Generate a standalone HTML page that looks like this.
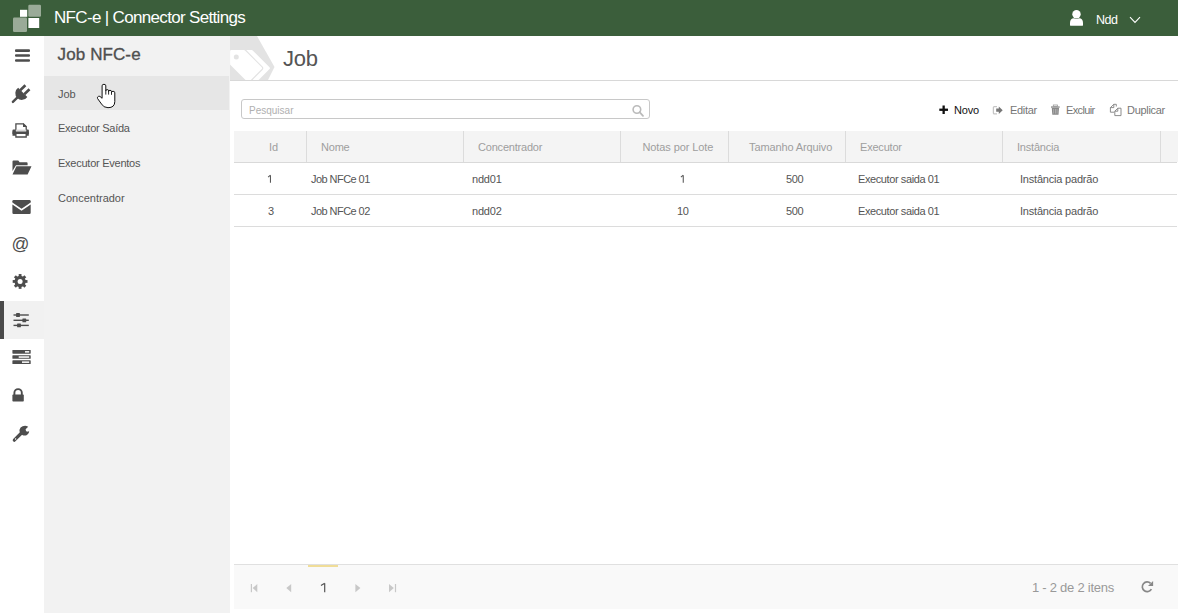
<!DOCTYPE html>
<html><head><meta charset="utf-8">
<style>
*{margin:0;padding:0;box-sizing:border-box}
html,body{width:1178px;height:613px;overflow:hidden;background:#fff;font-family:"Liberation Sans",sans-serif;color:#555}
.a{position:absolute}
.t{position:absolute;white-space:nowrap;line-height:1}
#hdr{left:0;top:0;width:1178px;height:36px;background:#3b5e3b}
#iconbar{left:0;top:36px;width:44px;height:577px;background:#fff}
#panel{left:44px;top:36px;width:186px;height:577px;background:#f2f2f2}
#main{left:230px;top:36px;width:948px;height:577px;background:#fff}
.ic{position:absolute;left:0;top:0}
</style></head><body>

<!-- HEADER -->
<div id="hdr" class="a">
  <svg class="ic" width="60" height="36">
    <rect x="13" y="17.5" width="14" height="14.5" rx="1.2" fill="#9aab98"/>
    <rect x="28.3" y="4.7" width="12.7" height="12" rx="1.2" fill="#9aab98"/>
    <rect x="20" y="9.8" width="7.2" height="7" fill="#fff"/>
    <rect x="28.4" y="18" width="10.8" height="10" fill="#fff"/>
  </svg>
  <div class="t" style="left:54px;top:8.6px;font-size:17px;color:#fff;letter-spacing:-0.67px">NFC-e | Connector Settings</div>
  <svg class="ic" width="1178" height="36">
    <circle cx="1076.5" cy="14.2" r="4.2" fill="#fff"/>
    <path d="M1070 25.3 L1070 23 Q1070 18.2 1074 18.2 Q1076.5 19.6 1079 18.2 Q1083 18.2 1083 23 L1083 25.3 Q1083 25.7 1082.5 25.7 L1070.5 25.7 Q1070 25.7 1070 25.3 Z" fill="#fff"/>
    <polyline points="1130,17.2 1135,22.4 1140,17.2" fill="none" stroke="#fff" stroke-width="1.1"/>
  </svg>
  <div class="t" style="left:1096px;top:13.6px;font-size:12.5px;color:#fff;letter-spacing:-0.5px">Ndd</div>
</div>

<!-- ICON BAR -->
<div id="iconbar" class="a"></div>
<div class="a" style="left:0;top:301px;width:44px;height:38px;background:#f1f1f1"></div>
<div class="a" style="left:0;top:301px;width:4px;height:38px;background:#4a4a4a"></div>
<svg class="ic" width="44" height="613" style="fill:#4d4d4d">
  <!-- hamburger -->
  <rect x="15" y="49.3" width="15" height="2.6" rx="1"/>
  <rect x="15" y="54.2" width="15" height="2.6" rx="1"/>
  <rect x="15" y="59.2" width="15" height="2.6" rx="1"/>
  <!-- plug -->
  <g>
    <line x1="12.9" y1="101.9" x2="18" y2="96.8" stroke="#4d4d4d" stroke-width="2.4" stroke-linecap="round"/>
    <path d="M18.16 87.86 L27.34 97.04 A6.6 6.6 0 1 1 18.16 87.86 Z"/>
    <line x1="20.2" y1="90.2" x2="25.4" y2="85.2" stroke="#4d4d4d" stroke-width="2.6"/>
    <line x1="24.3" y1="94.3" x2="29.5" y2="89.3" stroke="#4d4d4d" stroke-width="2.6"/>
  </g>
  <!-- printer -->
  <path d="M15.9 130.5 V123.8 H23.4 L26.2 126.6 V130.5" fill="none" stroke="#4d4d4d" stroke-width="1.3"/>
  <path d="M23 123.1 L26.9 127 L23 127 Z"/>
  <path d="M12.5 130.4 Q12.5 129.6 13.3 129.6 L15.9 129.6 L15.9 135.8 L12.5 135.8 Z"/>
  <path d="M26.2 129.6 L28 129.6 Q28.8 129.6 28.8 130.4 L28.8 135.8 L26.2 135.8 Z"/>
  <rect x="12.5" y="131.3" width="16.3" height="2.7"/>
  <rect x="15.9" y="129.6" width="10.3" height="1.7" fill="#d8d8d8"/>
  <path d="M15.9 134 V137 H26.2 V134" fill="none" stroke="#4d4d4d" stroke-width="1.3"/>
  <!-- folder open -->
  <path d="M12.5 161.5 Q12.5 160.6 13.5 160.6 L18.3 160.6 L19.6 162.2 L26.6 162.2 Q27.6 162.2 27.6 163.2 L27.6 165.2 L16 165.2 L12.5 171 Z"/>
  <path d="M16.4 166.2 L31.5 166.2 L27.6 174.5 L12.5 174.5 Z"/>
  <!-- envelope -->
  <path d="M13.6 200 L29.5 200 Q30.7 200 30.7 201.2 L30.7 202.6 L21.55 208.7 L12.4 202.6 L12.4 201.2 Q12.4 200 13.6 200 Z"/>
  <path d="M12.4 204.6 L21.55 210.7 L30.7 204.6 L30.7 212.8 Q30.7 214 29.5 214 L13.6 214 Q12.4 214 12.4 212.8 Z"/>
  <!-- at -->
  <text x="11.5" y="250.1" font-family="Liberation Sans" font-size="17.6" fill="#4d4d4d">@</text>
  <!-- gear -->
  <g transform="translate(20.1 281.45)">
    <circle r="5.6"/><rect x="-1.4" y="-7.4" width="2.8" height="3" transform="rotate(0)"/><rect x="-1.4" y="-7.4" width="2.8" height="3" transform="rotate(45)"/><rect x="-1.4" y="-7.4" width="2.8" height="3" transform="rotate(90)"/><rect x="-1.4" y="-7.4" width="2.8" height="3" transform="rotate(135)"/><rect x="-1.4" y="-7.4" width="2.8" height="3" transform="rotate(180)"/><rect x="-1.4" y="-7.4" width="2.8" height="3" transform="rotate(225)"/><rect x="-1.4" y="-7.4" width="2.8" height="3" transform="rotate(270)"/><rect x="-1.4" y="-7.4" width="2.8" height="3" transform="rotate(315)"/>
    <circle r="2.5" fill="#fff"/>
  </g>
  <!-- sliders -->
  <rect x="13.5" y="314.3" width="15.3" height="1.4"/>
  <rect x="13.5" y="319.6" width="15.3" height="1.4"/>
  <rect x="13.5" y="324.7" width="15.3" height="1.4"/>
  <rect x="16.1" y="313.1" width="3.8" height="3.8" rx="0.5"/>
  <rect x="22.4" y="318.4" width="3.8" height="3.8" rx="0.5"/>
  <rect x="17.1" y="323.5" width="3.8" height="3.8" rx="0.5"/>
  <!-- servers -->
  <rect x="12.4" y="350" width="18.3" height="3.7" rx="0.6"/>
  <rect x="12.4" y="355.2" width="18.3" height="3.6" rx="0.6"/>
  <rect x="12.4" y="360.3" width="18.3" height="3.7" rx="0.6"/>
  <rect x="25" y="351.1" width="4.2" height="1.5" fill="#fff"/>
  <rect x="18.7" y="356.3" width="10.5" height="1.5" fill="#fff"/>
  <rect x="22" y="361.4" width="7.2" height="1.5" fill="#fff"/>
  <!-- lock -->
  <path d="M14.4 395 L14.4 392.8 A3.7 3.7 0 0 1 21.8 392.8 L21.8 395" fill="none" stroke="#4d4d4d" stroke-width="1.9"/>
  <rect x="12.4" y="394.6" width="11.4" height="7" rx="0.8"/>
  <!-- wrench -->
  <line x1="14.3" y1="440.2" x2="21.5" y2="433" stroke="#4d4d4d" stroke-width="3.2" stroke-linecap="round"/>
  <path d="M28.2 426.8 L25.6 429.3 L26.1 431.3 L28.1 431.8 L29.2 430.7 Q29.4 433.6 27 435 Q24.6 436.2 22.3 435 L19.8 432.5 Q18.9 429.6 20.6 427.6 Q23 425.4 26.5 426 Z"/>
  <circle cx="15.6" cy="439" r="0.7" fill="#fff"/>
</svg>

<!-- PANEL -->
<div id="panel" class="a"></div>
<div class="a" style="left:44px;top:76px;width:185px;height:34px;background:#e6e6e6"></div>
<div class="t" style="left:57.6px;top:45.9px;font-size:17px;color:#4f4f4f;-webkit-text-stroke:0.35px #4f4f4f;letter-spacing:0.1px">Job NFC-e</div>
<div class="t" style="left:58px;top:88.5px;font-size:11px;color:#555">Job</div>
<div class="t" style="left:58px;top:122.5px;font-size:11px;color:#555;letter-spacing:-0.25px">Executor Saída</div>
<div class="t" style="left:58px;top:158.1px;font-size:11px;color:#555;letter-spacing:-0.25px">Executor Eventos</div>
<div class="t" style="left:58px;top:193px;font-size:11px;color:#555;letter-spacing:0px">Concentrador</div>
<!-- cursor -->
<svg class="ic" style="left:94px;top:80px" width="26" height="30">
  <path d="M8.1 18.3 L8.1 5.8 Q8.1 4.3 9.95 4.3 Q11.8 4.3 11.8 5.8 L11.8 10.8 Q11.8 9.6 13.2 9.6 Q14.6 9.6 14.6 10.8 L14.6 11.4 Q14.6 10.3 16 10.3 Q17.5 10.3 17.5 11.6 L17.5 12.4 Q17.5 11.3 19.1 11.3 Q20.8 11.3 20.8 12.8 L20.8 21.5 Q20.8 27.7 14 27.7 Q9.5 27.7 7.5 24 L3.6 18.6 Q2.8 17 4.6 16.3 Q6 15.9 7 17.3 Z" fill="#fff" stroke="#111" stroke-width="1" stroke-linejoin="round"/>
  <line x1="11.8" y1="10.5" x2="11.8" y2="14.6" stroke="#111" stroke-width="0.9"/>
  <line x1="14.6" y1="11" x2="14.6" y2="14.6" stroke="#111" stroke-width="0.9"/>
  <line x1="17.5" y1="12" x2="17.5" y2="14.8" stroke="#111" stroke-width="0.9"/>
</svg>

<!-- MAIN -->
<div id="main" class="a"></div>
<svg class="ic" style="left:230px;top:36px" width="60" height="45">
  <polygon points="0,0 27,0 44.5,31 38,44 0,44" fill="#e3e3e3"/>
  <!-- back tag -->
  <path d="M9.2 15.3 L21.8 15.3 L38.6 32.2 L26 44.8 L9.2 28.2 Z" fill="#fff" stroke="#fff" stroke-width="2.6" stroke-linejoin="round"/>
  <path d="M1.4 15.3 L14 15.3 L30.8 32.2 L18.2 44.8 L1.4 28.2 Z" fill="#e3e3e3" stroke="#e3e3e3" stroke-width="4.8" stroke-linejoin="round"/>
  <path d="M1.4 15.3 L14 15.3 L30.8 32.2 L18.2 44.8 L1.4 28.2 Z" fill="#fff" stroke="#fff" stroke-width="2.6" stroke-linejoin="round"/>
  <circle cx="6.3" cy="20.9" r="2.5" fill="#e3e3e3"/>
  <rect x="0" y="44" width="60" height="1" fill="#d8d8d8"/>
</svg>
<div class="a" style="left:290px;top:80px;width:888px;height:1px;background:#d8d8d8"></div>
<div class="t" style="left:283px;top:47.9px;font-size:22px;color:#555;letter-spacing:-0.3px">Job</div>

<!-- search -->
<div class="a" style="left:241px;top:99px;width:409px;height:20px;border:1px solid #c8c8c8;border-radius:3px"></div>
<div class="t" style="left:249px;top:105.9px;font-size:10px;color:#b0b0b0">Pesquisar</div>
<svg class="ic" width="1178" height="613" style="pointer-events:none">
  <circle cx="636.9" cy="109.5" r="3.8" fill="none" stroke="#bbb" stroke-width="1.6"/>
  <line x1="639.6" y1="112.2" x2="643" y2="115.8" stroke="#bbb" stroke-width="1.8" stroke-linecap="round"/>
  <!-- plus -->
  <rect x="939.3" y="108.6" width="8.7" height="2.3" fill="#111"/>
  <rect x="942.5" y="105.5" width="2.3" height="8.5" fill="#111"/>
  <!-- edit icon (sign-out like) -->
  <path d="M997 106.6 L994.3 106.6 Q993.4 106.6 993.4 107.5 L993.4 112.9 Q993.4 113.8 994.3 113.8 L997 113.8" fill="none" stroke="#c5c5c5" stroke-width="1.3"/>
  <path d="M996.2 108.6 L998.8 108.6 L998.8 106.4 L1002.7 110.2 L998.8 114 L998.8 111.8 L996.2 111.8 Z" fill="#777"/>
  <!-- trash -->
  <rect x="1051" y="106.4" width="8.7" height="1.3" fill="#888"/>
  <rect x="1053.3" y="105" width="4.1" height="1.5" fill="none" stroke="#999" stroke-width="0.8"/>
  <path d="M1051.8 108.1 L1059 108.1 L1058.5 114.7 L1052.3 114.7 Z" fill="#888"/>
  <rect x="1053.4" y="109" width="0.7" height="4.6" fill="#bbb"/>
  <rect x="1055.1" y="109" width="0.7" height="4.6" fill="#bbb"/>
  <rect x="1056.7" y="109" width="0.7" height="4.6" fill="#bbb"/>
  <!-- duplicate -->
  <path d="M1113.8 104.3 L1110.4 107.6 L1110.4 112.2 L1114.2 112.2 M1113.8 104.3 L1116.3 104.3 L1116.3 106.5 M1113.8 104.3 L1113.8 107.6 L1110.4 107.6" fill="none" stroke="#808080" stroke-width="0.9"/>
  <path d="M1117.8 108.2 L1121 108.2 L1121 115.6 L1114.8 115.6 L1114.8 111.2 Z M1117.8 108.2 L1117.8 111.2 L1114.8 111.2" fill="#fff" stroke="#808080" stroke-width="0.9"/>
</svg>
<div class="t" style="left:954px;top:104.9px;font-size:11px;color:#111;letter-spacing:-0.15px">Novo</div>
<div class="t" style="left:1010px;top:104.9px;font-size:11px;color:#767676;letter-spacing:-0.3px">Editar</div>
<div class="t" style="left:1066px;top:104.9px;font-size:11px;color:#767676;letter-spacing:-0.65px">Excluir</div>
<div class="t" style="left:1127px;top:104.6px;font-size:11px;color:#767676;letter-spacing:-0.3px">Duplicar</div>

<!-- TABLE -->
<div class="a" style="left:234px;top:131px;width:944px;height:31px;background:#f4f4f4"></div>
<div class="a" style="left:234px;top:162px;width:943px;height:1px;background:#d9d9d9"></div>
<div class="a" style="left:234px;top:194px;width:943px;height:1px;background:#dcdcdc"></div>
<div class="a" style="left:234px;top:226px;width:943px;height:1px;background:#dcdcdc"></div>
<div class="a" style="left:306px;top:131px;width:1px;height:31px;background:#dcdcdc"></div>
<div class="a" style="left:463px;top:131px;width:1px;height:31px;background:#dcdcdc"></div>
<div class="a" style="left:620px;top:131px;width:1px;height:31px;background:#dcdcdc"></div>
<div class="a" style="left:728px;top:131px;width:1px;height:31px;background:#dcdcdc"></div>
<div class="a" style="left:845px;top:131px;width:1px;height:31px;background:#dcdcdc"></div>
<div class="a" style="left:1002px;top:131px;width:1px;height:31px;background:#dcdcdc"></div>
<div class="a" style="left:1160px;top:131px;width:1px;height:31px;background:#dcdcdc"></div>

<div class="t" style="left:269px;top:142.1px;font-size:11px;color:#9e9e9e">Id</div>
<div class="t" style="left:321px;top:142.1px;font-size:11px;color:#9e9e9e;letter-spacing:-0.2px">Nome</div>
<div class="t" style="left:478px;top:142.1px;font-size:11px;color:#9e9e9e;letter-spacing:-0.2px">Concentrador</div>
<div class="t" style="left:642.5px;top:142.1px;font-size:11px;color:#9e9e9e;letter-spacing:-0.1px">Notas por Lote</div>
<div class="t" style="left:749px;top:142.1px;font-size:11px;color:#9e9e9e;letter-spacing:-0.12px">Tamanho Arquivo</div>
<div class="t" style="left:860px;top:142.1px;font-size:11px;color:#9e9e9e;letter-spacing:-0.2px">Executor</div>
<div class="t" style="left:1017px;top:142.1px;font-size:11px;color:#9e9e9e;letter-spacing:-0.2px">Instância</div>

<svg class="ic" width="1178" height="613"><path d="M270.45 175.2 V182.8 M268.1 177.1 L270.45 175.2" fill="none" stroke="#555" stroke-width="1.05"/><path d="M683.25 175.2 V182.8 M680.9 177.1 L683.25 175.2" fill="none" stroke="#555" stroke-width="1.05"/></svg>
<div class="t" style="left:311px;top:173.5px;font-size:11px;color:#555;letter-spacing:-0.55px">Job NFCe 01</div>
<div class="t" style="left:472px;top:173.5px;font-size:11px;color:#555;letter-spacing:-0.2px">ndd01</div>

<div class="t" style="left:786px;top:173.5px;font-size:11px;color:#555;letter-spacing:-0.4px">500</div>
<div class="t" style="left:858px;top:173.5px;font-size:11px;color:#555;letter-spacing:-0.4px">Executor saida 01</div>
<div class="t" style="left:1020px;top:173.5px;font-size:11px;color:#555;letter-spacing:-0.2px">Instância padrão</div>

<div class="t" style="left:268px;top:205.5px;font-size:11px;color:#555">3</div>
<div class="t" style="left:311px;top:205.5px;font-size:11px;color:#555;letter-spacing:-0.55px">Job NFCe 02</div>
<div class="t" style="left:472px;top:205.5px;font-size:11px;color:#555;letter-spacing:-0.2px">ndd02</div>
<div class="t" style="left:677px;top:205.5px;font-size:11px;color:#555;letter-spacing:-0.4px">10</div>
<div class="t" style="left:786px;top:205.5px;font-size:11px;color:#555;letter-spacing:-0.4px">500</div>
<div class="t" style="left:858px;top:205.5px;font-size:11px;color:#555;letter-spacing:-0.4px">Executor saida 01</div>
<div class="t" style="left:1020px;top:205.5px;font-size:11px;color:#555;letter-spacing:-0.2px">Instância padrão</div>

<!-- PAGER -->
<div class="a" style="left:234px;top:564px;width:944px;height:45px;background:#f9f9f9;border-top:1px solid #e0e0e0"></div>
<div class="a" style="left:308px;top:565px;width:30px;height:2px;background:#f0dd98"></div>
<svg class="ic" width="1178" height="613">
  <path d="M324.7 583.2 V592.2 M321 585.6 L324.7 583.2" fill="none" stroke="#555" stroke-width="1.2"/>
  <g fill="#c8c8c8">
    <rect x="250.8" y="584" width="1.2" height="8.2"/>
    <polygon points="257.3,584 257.3,592.2 252.6,588.1"/>
    <polygon points="291.2,584 291.2,592.2 286.3,588.1"/>
    <polygon points="355.4,584 355.4,592.2 360.4,588.1"/>
    <polygon points="389,584 389,592.2 393.8,588.1"/>
    <rect x="394.9" y="584" width="1.2" height="8.2"/>
  </g>
  <path d="M1150.6 583.4 A4.85 4.85 0 1 0 1151.4 589.1" fill="none" stroke="#888" stroke-width="1.7"/>
  <polygon points="1153.1,581 1153.1,586.1 1148,586.1" fill="#888"/>
</svg>

<div class="t" style="left:1032px;top:580.8px;font-size:13px;color:#999;letter-spacing:-0.25px">1 - 2 de 2 itens</div>

</body></html>
